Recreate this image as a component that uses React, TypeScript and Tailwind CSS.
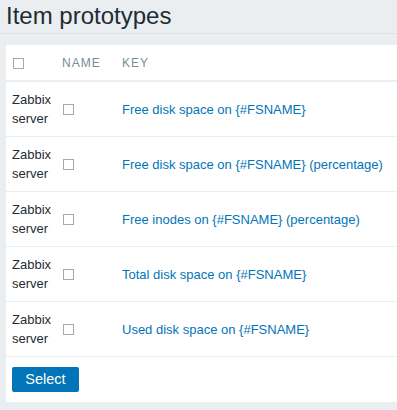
const rows: string[] = [
  "Free disk space on {#FSNAME}",
  "Free disk space on {#FSNAME} (percentage)",
  "Free inodes on {#FSNAME} (percentage)",
  "Total disk space on {#FSNAME}",
  "Used disk space on {#FSNAME}",
];

function Box() {
  return <span className="block w-[11px] h-[11px] border border-[#a8a8a8] bg-white" />;
}

export default function App(): JSX.Element {
  return (
    <div
      className="w-full h-[410px] bg-[#ebeef0] overflow-hidden text-[#1f2c33]"
      style={{ fontFamily: '"Liberation Sans", Arial, sans-serif' }}
    >
      <h1 className="h-[34px] border-b border-[#dce1e4] pl-[6px] pt-[2px] text-[24px] leading-[28px] text-[#1f2c33]">
        Item prototypes
      </h1>
      <div className="mt-[11px] ml-[6px] bg-white">
        <div className="grid grid-cols-[50px_60px_1fr] h-[37px] items-center border-b-2 border-[#ebeef0] text-[12px] tracking-[1px] text-[#768d99]">
          <div className="pl-[7px] pt-[1px]">
            <Box />
          </div>
          <div className="pl-[6px] pt-[1px]">NAME</div>
          <div className="pl-[6px] pt-[1px]">KEY</div>
        </div>
        {rows.map((r) => (
          <div
            key={r}
            className="grid grid-cols-[50px_60px_1fr] h-[55px] items-center border-b border-[#ebeef0] text-[13px] leading-[19px]"
          >
            <div className="pl-[6px]">Zabbix server</div>
            <div className="pl-[7px]">
              <Box />
            </div>
            <div className="pl-[6px] text-[#0275b8]">{r}</div>
          </div>
        ))}
        <div className="pt-[10px] pb-[10px] pl-[6px]">
          <button className="block w-[67px] h-[25px] rounded-[2px] bg-[#0275b8] text-white text-[14.5px] leading-[25px]">
            Select
          </button>
        </div>
      </div>
    </div>
  );
}
